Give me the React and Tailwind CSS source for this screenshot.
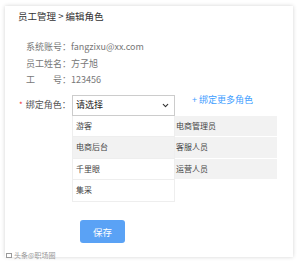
import React from "react";
import { ChevronDown } from "lucide-react";

const font = { fontFamily: '"Noto Sans CJK SC", "Noto Sans", sans-serif' };

const leftRoles = [
  { name: "游客", bg: "bg-white" },
  { name: "电商后台", bg: "bg-[#f2f2f2]" },
  { name: "千里眼", bg: "bg-white" },
  { name: "集采", bg: "bg-white" },
];

const rightRoles = ["电商管理员", "客服人员", "运营人员"];

export default function App() {
  return (
    <div className="relative w-[300px] h-[264px] bg-white pt-[6px] pl-[5px] overflow-hidden" style={font}>
      <div className="w-[288px] h-[251px] bg-white shadow-[0_0_4px_rgba(0,0,0,0.18)] flex flex-col">
        {/* Breadcrumb */}
        <div className="ml-[13px] mt-[4px] text-[9.5px] leading-[12px] text-[#333]">员工管理 &gt; 编辑角色</div>

        {/* Account info */}
        <div className="ml-[21px] mt-[17px] flex flex-col text-[9px] leading-[16.5px] text-[#777]">
          <div>系统账号：fangzixu@xx.com</div>
          <div>员工姓名：方子旭</div>
          <div className="flex">
            <span>工</span>
            <span className="ml-[18px]">号：123456</span>
          </div>
        </div>

        {/* Role binding */}
        <div className="mt-[6px] flex items-start">
          <div className="ml-[14px] w-[53px] h-[21px] flex items-center whitespace-nowrap text-[9px] text-[#555]">
            <span className="text-[#e33] mr-[3px] text-[8px]">*</span>
            <span>绑定角色：</span>
          </div>
          <div className="w-[103px] h-[21px] border border-[#ccc] bg-white flex items-center justify-between pl-[3px] pr-[4px] text-[9px] text-[#222]">
            <span>请选择</span>
            <ChevronDown className="w-[9px] h-[9px] text-[#333]" strokeWidth={3} />
          </div>
          <div className="ml-[17px] mt-[-2px] text-[9px] text-[#409eff] whitespace-nowrap">+ 绑定更多角色</div>
        </div>

        <div className="ml-[67px] flex text-[8px] text-[#444]">
          <div className="w-[103px] flex flex-col border-x border-[#eee]">
            {leftRoles.map((r) => (
              <div key={r.name} className={`h-[21.5px] flex items-center pl-[3px] border-b border-[#eee] ${r.bg}`}>
                {r.name}
              </div>
            ))}
          </div>
          <div className="w-[102px] flex flex-col self-start">
            {rightRoles.map((r) => (
              <div key={r} className="h-[21.5px] flex items-center pl-[1px] bg-[#f2f2f2] border-b border-white">
                {r}
              </div>
            ))}
          </div>
        </div>

        {/* Save */}
        <div className="ml-[75px] mt-[15px]">
          <button className="w-[45px] h-[23px] rounded-[3px] bg-[#5aa2f5] text-white text-[9.5px]">保存</button>
        </div>
      </div>

      {/* watermark */}
      <div className="absolute left-[6px] top-[250px] flex items-center gap-[2px] text-[7px] text-[#999]">
        <span className="w-[6px] h-[5px] border border-[#999]" />
        <span>头条@职场圈</span>
      </div>
    </div>
  );
}
